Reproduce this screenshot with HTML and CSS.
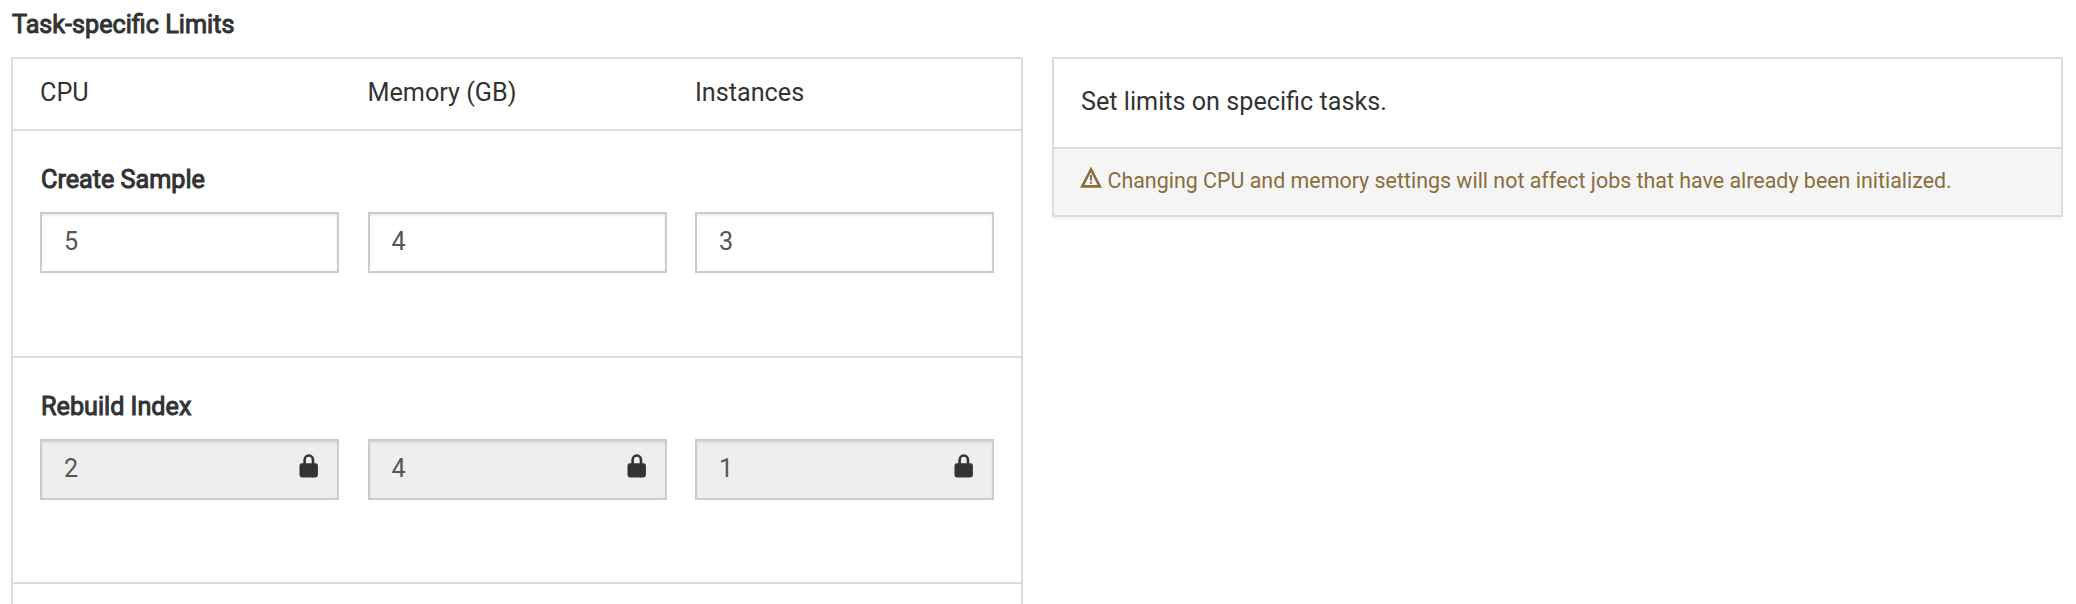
FILE: index.html
```html
<!DOCTYPE html>
<html lang="en">
<head>
<meta charset="utf-8">
<title>Task-specific Limits</title>
<link rel="stylesheet" href="styles.css">
</head>
<body>
<main class="page">
  <h1 class="title"><span>Task-specific Limits</span></h1>
  <div class="columns">
    <section class="panel limits">
      <div class="row head"><span>CPU</span><span>Memory (GB)</span><span>Instances</span></div>
      <div class="task">
        <h2 class="name"><span>Create Sample</span></h2>
        <div class="row">
          <div class="field">5</div><div class="field">4</div><div class="field">3</div>
        </div>
      </div>
      <div class="task second">
        <h2 class="name"><span>Rebuild Index</span></h2>
        <div class="row">
          <div class="field locked">2<svg class="lock" viewBox="0 0 20 24"><path fill="none" stroke="currentColor" stroke-width="2.6" d="M5.6 10V6.2a4.2 4.7 0 0 1 8.4 0V10"/><rect x="0.5" y="9.2" width="18.4" height="14.3" rx="2.4" fill="currentColor"/></svg></div>
          <div class="field locked">4<svg class="lock" viewBox="0 0 20 24"><path fill="none" stroke="currentColor" stroke-width="2.6" d="M5.6 10V6.2a4.2 4.7 0 0 1 8.4 0V10"/><rect x="0.5" y="9.2" width="18.4" height="14.3" rx="2.4" fill="currentColor"/></svg></div>
          <div class="field locked">1<svg class="lock" viewBox="0 0 20 24"><path fill="none" stroke="currentColor" stroke-width="2.6" d="M5.6 10V6.2a4.2 4.7 0 0 1 8.4 0V10"/><rect x="0.5" y="9.2" width="18.4" height="14.3" rx="2.4" fill="currentColor"/></svg></div>
        </div>
      </div>
    </section>
    <aside class="panel info">
      <div class="info-body"><span>Set limits on specific tasks.</span></div>
      <div class="info-foot">
        <svg class="warn" viewBox="0 0 22 22"><path fill="none" stroke="currentColor" stroke-width="2.6" d="M11 2.4L19.8 19.4H2.2Z"/><path stroke="currentColor" stroke-width="2" d="M11 8v5.4M11 14.8v2"/></svg>
        <span>Changing CPU and memory settings will not affect jobs that have already been initialized.</span>
      </div>
    </aside>
  </div>
</main>
</body>
</html>
```
FILE: styles.css
```css
* { box-sizing: border-box; }
html, body { height: 604px; overflow: hidden; }
body { margin: 0; background: #fff; color: #333; font: 25.2px/36px Roboto, sans-serif; }
.page { height: 604px; overflow: hidden; padding: 0 13px 0 11px; }
.title, .name { margin: 0; font-size: 25.2px; font-weight: 400; -webkit-text-stroke: 1px #333; }
.title { height: 57px; padding: 7px 0 0 1px; }
.columns { display: flex; gap: 29px; align-items: flex-start; }
.panel { border: 2px solid #ddd; }
.limits { width: 1012px; height: 547px; border-bottom: 0; }
.row { display: grid; grid-template-columns: 299px 299px 299px; column-gap: 28.5px; padding-left: 27px; }
.head { height: 72px; padding-top: 16px; border-bottom: 2px solid #ddd; }
.task { height: 227px; border-bottom: 2px solid #ddd; }
.second { height: 226px; }
.name { height: 81px; padding: 31px 0 0 28px; }
.field { display: flex; justify-content: space-between; height: 61px; padding: 10px 18px 0 22px; border: 2px solid #ccc; box-shadow: inset 0 2px 2px rgba(0, 0, 0, 0.075); color: #555; }
.locked { background: #eee; }
.lock { width: 20px; height: 24px; margin-top: 3px; color: #333; }
.info { width: 1011px; box-shadow: 0 2px 2px rgba(0, 0, 0, 0.05); }
.info-body { height: 88px; padding: 25px 27px; }
.info-foot { display: flex; gap: 5.5px; height: 68px; padding: 14px 26px; border-top: 2px solid #ddd; background: #f5f5f5; color: #8a6d3b; font-size: 21.42px; }
.warn { width: 22px; height: 22px; margin-top: 4px; }
```
